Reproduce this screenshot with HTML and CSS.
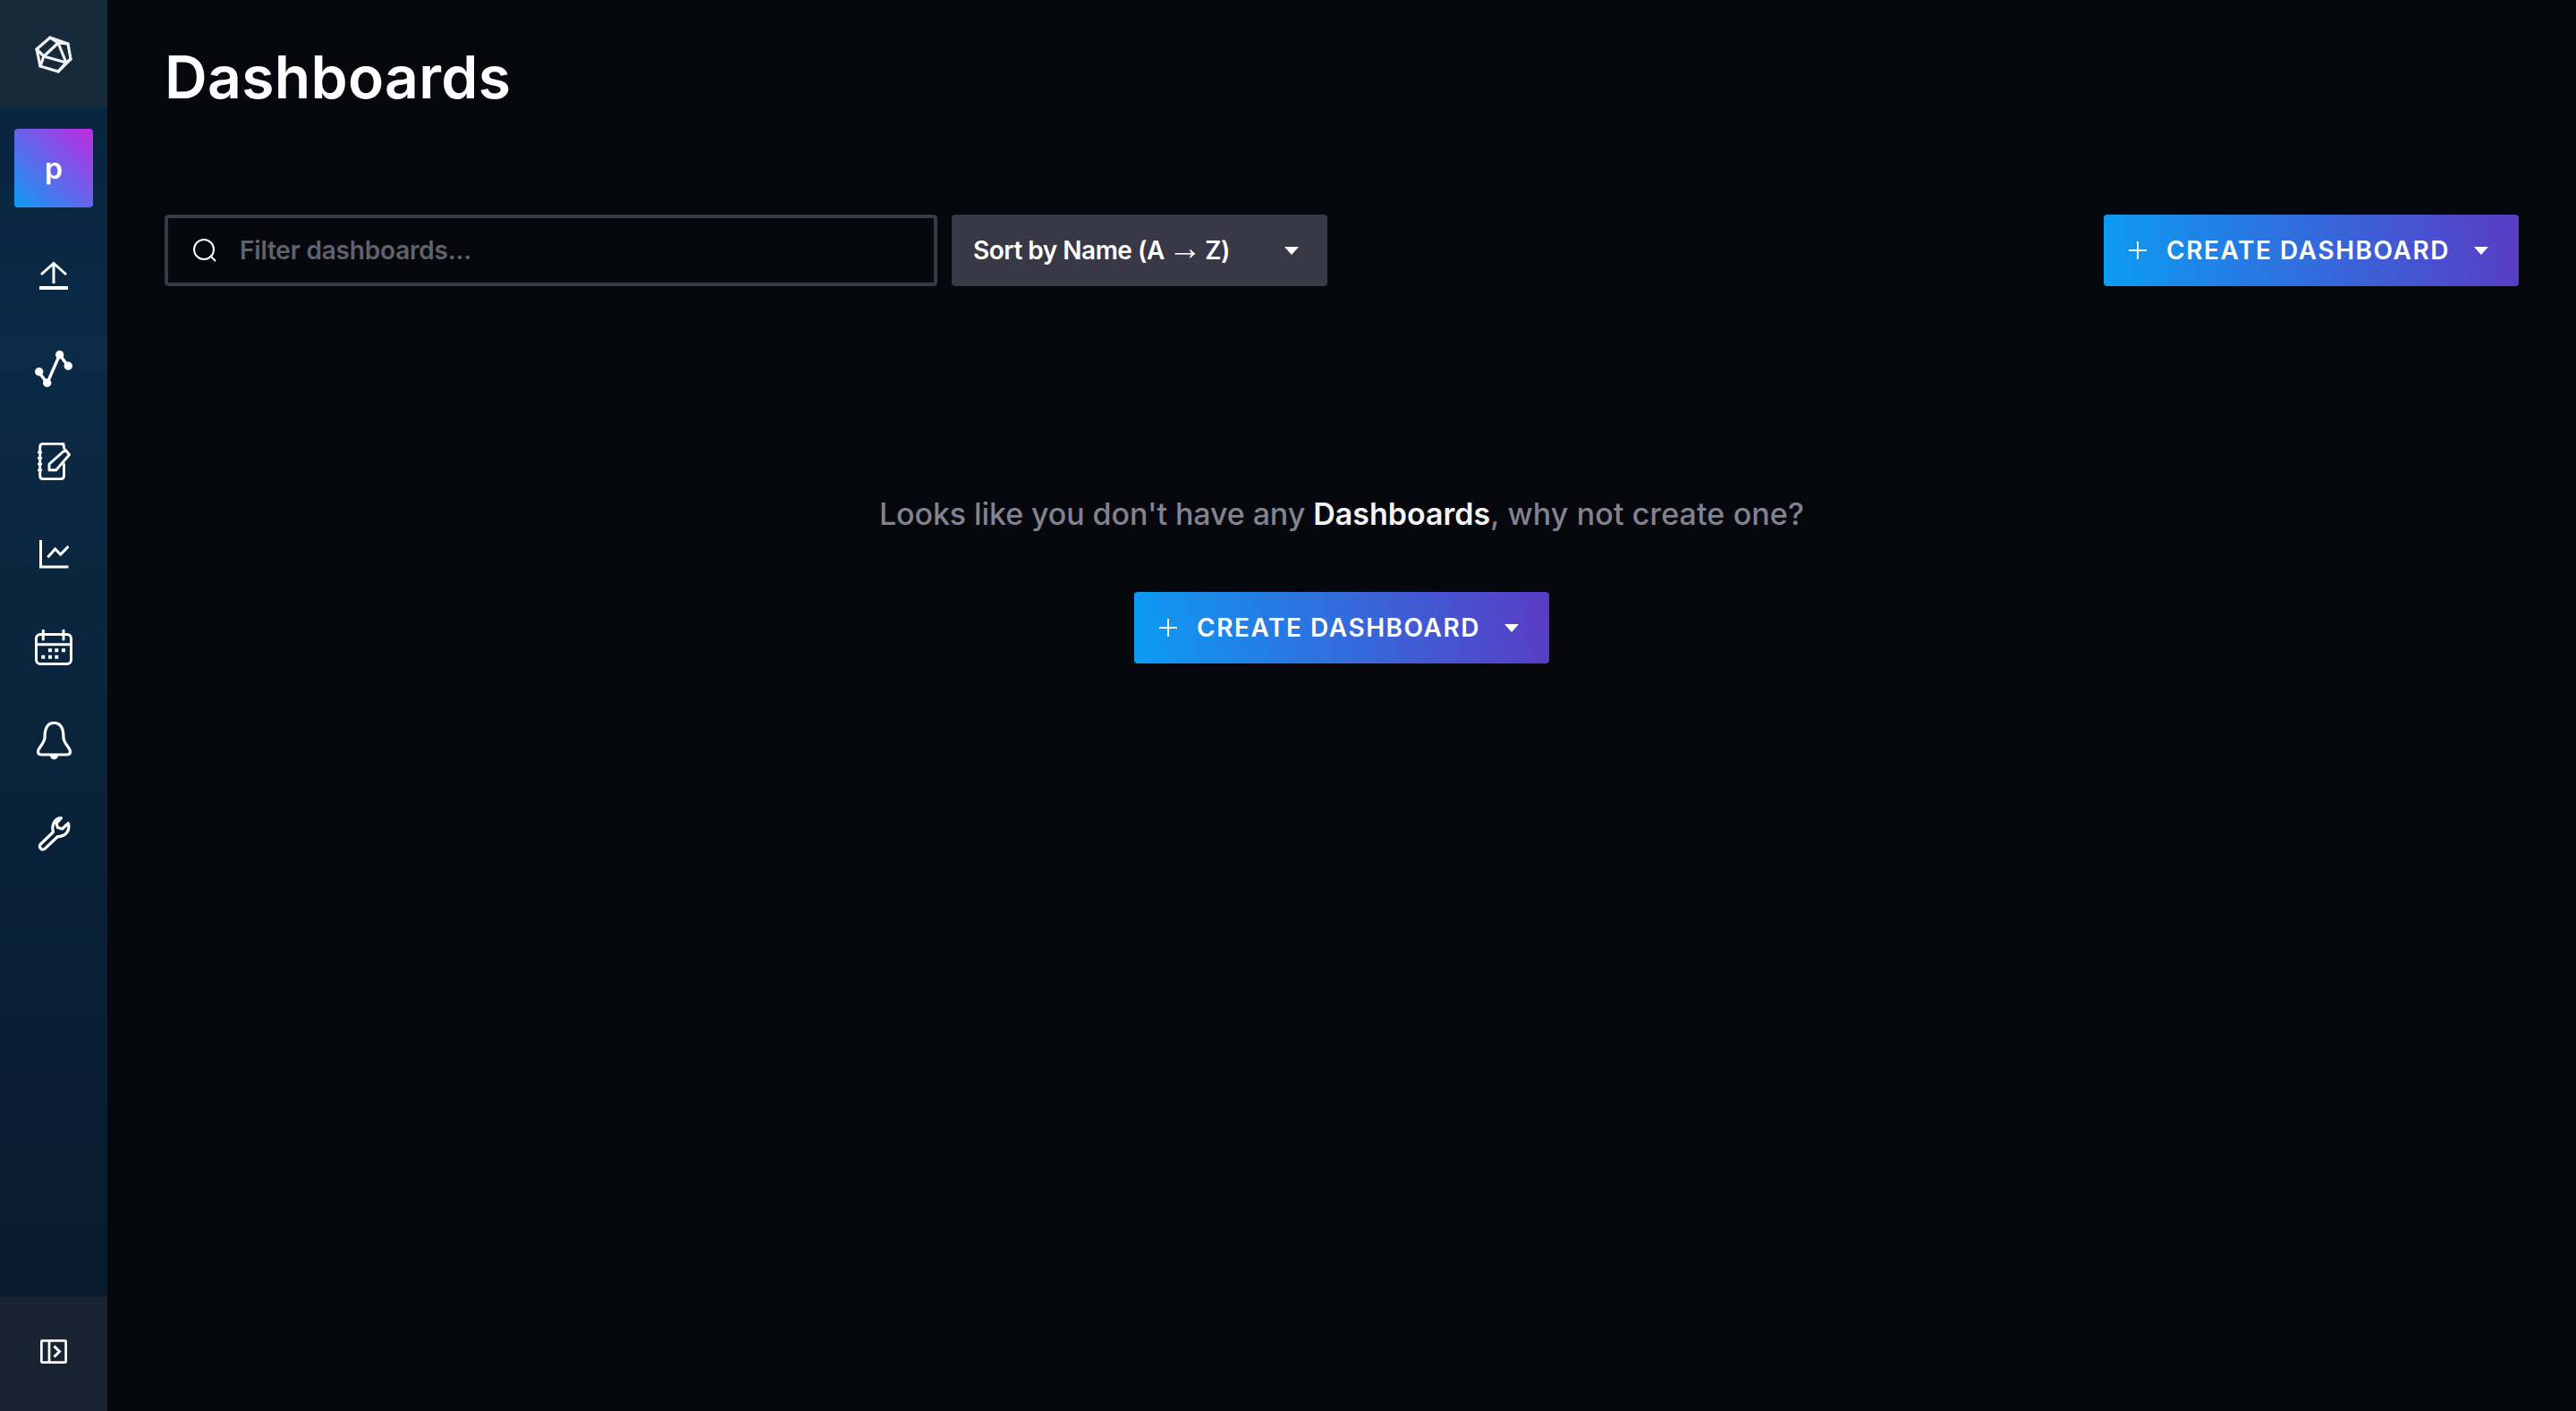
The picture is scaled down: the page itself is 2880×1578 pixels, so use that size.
FILE: index.html
```html
<!DOCTYPE html>
<html lang="en">
<head>
<meta charset="utf-8">
<title>Dashboards</title>
<link rel="stylesheet" href="styles.css">
</head>
<body>
<div class="app">
  <nav class="nav">
    <div class="nav-logo">
      <svg class="ico-logo" viewBox="0 0 42 42" fill="none" stroke="#f1f1f3" stroke-width="3.200" stroke-linejoin="round" stroke-linecap="round"><path d="M17 2 37 9 40 26 26 40 6 34 2 15Z"/><path d="M17 2 26 8 37 9M26 8 10 23 2 15M26 8 35 30 40 26M10 23 35 30 26 40M10 23 6 34"/></svg>
    </div>
    <div class="nav-org"><span class="org-tile">p</span></div>
    <div class="nav-items">
      <a class="nav-item"><svg class="ico-upload" viewBox="0 0 32 32" fill="none" stroke="#fff" stroke-width="3"><path d="M16 25V2.500M2 15 16 2.500 30 15"/><path d="M0 30h32" stroke-width="4"/></svg></a>
      <a class="nav-item"><svg class="ico-graph" viewBox="0 0 42 41" fill="none" stroke="#fff" stroke-width="3.400"><path d="M4.300 23.700 13.700 36.700 27.700 4.700 37 17.300"/><circle cx="4.700" cy="23.700" r="4.700" fill="#fff" stroke="none"/><circle cx="13.700" cy="36.300" r="4.700" fill="#fff" stroke="none"/><circle cx="27.700" cy="4.700" r="4.700" fill="#fff" stroke="none"/><circle cx="37.300" cy="17.300" r="4.700" fill="#fff" stroke="none"/></svg></a>
      <a class="nav-item"><svg class="ico-note" viewBox="0 0 37 42" fill="none" stroke="#fff" stroke-width="2.900" stroke-linejoin="round" stroke-linecap="round"><path d="M29 1.400H6Q2.700 1.400 2.700 5V37Q2.700 40.600 6 40.600H26Q29.500 40.600 29.500 37V24"/><path d="M26 1.400Q29.500 1.400 29.500 5V6"/><path d="M13 24V30.700H20.700L35.500 13.500 31 8Z"/><path d="M1 10.700H4M1 17.300H4M1 24H4M1 30.700H4" stroke-width="2.600"/></svg></a>
      <a class="nav-item"><svg class="ico-chart" viewBox="0 0 33 32" fill="none" stroke="#fff" stroke-width="3"><path d="M1.500 0V30H32.500"/><path d="M9.300 19.300 17.700 10 23.700 16 32.500 7"/></svg></a>
      <a class="nav-item"><svg class="ico-cal" viewBox="0 0 42 40" fill="none" stroke="#fff" stroke-width="3"><rect x="1.500" y="5.500" width="39" height="33" rx="4.500"/><path d="M1.500 16.700h39"/><path d="M9.300 1v10M32 1v10" stroke-linecap="round"/><path d="M15 23.300h4M22.300 23.300h4M30 23.300h4M7.300 30.700h4M15 30.700h4M22.300 30.700h4" stroke-width="4"/></svg></a>
      <a class="nav-item"><svg class="ico-bell" viewBox="0 0 39 43" fill="none" stroke="#fff" stroke-width="3.200" stroke-linejoin="round"><path d="M19.500 1.500C10.500 1.500 9 10 9 18C9 24 1.500 29.500 1.500 33.500C1.500 36 3 37 5 37H34C36 37 37.500 36 37.500 33.500C37.500 29.500 30 24 30 18C30 10 28.500 1.500 19.500 1.500Z"/><path d="M15 37.500H24A4.500 5 0 0 1 15 37.500Z" fill="#fff" stroke="none"/></svg></a>
      <a class="nav-item"><svg class="ico-wrench" viewBox="0 0 37 39" fill="none" stroke="#fff" stroke-width="3.200" stroke-linejoin="round"><path d="M26.500 1.800 21 8 22.500 12.500 27.500 14 34.300 7.800C36.500 15 32 23 22.500 22.500L8 36.300C5 38.500 1 35 3 31.500L17.500 17.500C15 9 20 1.500 26.500 1.800Z"/></svg></a>
    </div>
    <div class="nav-collapse">
      <svg class="ico-collapse" viewBox="0 0 30 27" fill="none" stroke="#fff" stroke-width="2.700"><rect x="1.350" y="1.350" width="27.300" height="24.300" rx="1"/><path d="M10 1v25"/><path d="M15.500 7.500 21.500 13.500 15.500 19.500" stroke-width="3"/></svg>
    </div>
  </nav>
  <main class="main">
    <h1 class="title">Dashboards</h1>
    <div class="toolbar">
      <label class="search">
        <svg class="search-ico" viewBox="0 0 26 26" fill="none" stroke="#fff" stroke-width="2"><circle cx="12" cy="12" r="11"/><path d="M19 19 25 25"/></svg>
        <span class="placeholder">Filter dashboards...</span>
      </label>
      <button class="sort"><span>Sort by Name (A<span class="arrow">→</span>Z)</span><i class="caret"></i></button>
      <button class="create toolbar-create"><span class="plus"></span><span class="create-label">CREATE DASHBOARD</span><i class="caret"></i></button>
    </div>
    <section class="empty">
      <p class="empty-text"><span class="lead">Looks like you don't have any</span> <b>Dashboards</b><span class="tail">, why not create one?</span></p>
      <button class="create"><span class="plus"></span><span class="create-label">CREATE DASHBOARD</span><i class="caret"></i></button>
    </section>
  </main>
</div>
</body>
</html>
```
FILE: styles.css
```css
* { box-sizing: border-box; }
html, body { margin: 0; height: 100%; background: #07080d; }
body { font-family: "Inter", "Roboto", sans-serif; color: #fff; }
.app { display: flex; height: 1578px; overflow: hidden; }

.nav { width: 120px; flex: none; display: flex; flex-direction: column; background: linear-gradient(180deg, #06233c 0%, #0b2a45 25%, #07182a 100%); }
.nav-logo { height: 120px; flex: none; display: flex; align-items: center; justify-content: center; padding-top: 2px; background: #172a3b; }
.nav-org { padding: 24px 16px 0; }
.org-tile { display: flex; width: 88px; height: 88px; align-items: center; justify-content: center; border-radius: 4px; background: linear-gradient(45deg, #0b9cf3 0%, #c22ae0 100%); font-size: 32px; font-weight: 600; }
.nav-items { flex: 1; padding-top: 24px; display: flex; flex-direction: column; }
.nav-item { height: 104px; display: flex; align-items: center; justify-content: center; }
.ico-logo { width: 42px; height: 42px; }
.ico-upload { width: 32px; height: 32px; }
.ico-graph { width: 42px; height: 41px; }
.ico-note { width: 37px; height: 42px; }
.ico-chart { width: 33px; height: 32px; }
.ico-cal { width: 42px; height: 40px; }
.ico-bell { width: 39px; height: 43px; }
.ico-wrench { width: 37px; height: 39px; }
.nav-collapse { height: 128px; flex: none; display: flex; align-items: center; justify-content: center; padding-bottom: 5px; background: #182431; }
.ico-collapse { width: 30px; height: 27px; }

.main { flex: 1; padding: 0 64px; min-width: 0; }
.title { margin: 0; height: 240px; padding-top: 48px; font-size: 66px; line-height: 76px; font-weight: 600; letter-spacing: 0.3px; }
.toolbar { display: flex; align-items: center; gap: 16px; }
.search { width: 864px; height: 80px; display: flex; align-items: center; padding-left: 28px; gap: 26px; border: 4px solid #383846; border-radius: 4px; background: #07080d; }
.search-ico { width: 26px; height: 26px; flex: none; }
.placeholder { font-size: 28px; font-weight: 600; letter-spacing: -0.2px; color: #62626f; }
.sort { width: 420px; height: 80px; display: flex; align-items: center; justify-content: space-between; padding: 0 32px 0 24px; border: 0; border-radius: 4px; background: #383846; color: #fff; font: 600 28px "Inter", "Roboto", sans-serif; letter-spacing: -0.5px; }
.arrow { display: inline-block; margin: 0 4px; font-family: "Liberation Serif", serif; font-size: 38px; line-height: 0; font-weight: 400; }
.caret { width: 0; height: 0; flex: none; border-left: 8.5px solid transparent; border-right: 8.5px solid transparent; border-top: 9px solid #fff; }
.create { width: 464px; height: 80px; display: flex; align-items: center; padding: 0 34px 0 28px; border: 0; border-radius: 4px; background: linear-gradient(80deg, #0b9cf3 0%, #5a3bc5 100%); color: #fff; font: 600 28px "Inter", "Roboto", sans-serif; letter-spacing: 1.55px; }
.toolbar-create { margin-left: auto; }
.create-label { flex: 1; text-align: left; white-space: nowrap; }
.create .plus { position: relative; width: 20px; height: 20px; flex: none; margin-right: 22px; }
.plus::before, .plus::after { content: ""; position: absolute; background: #fff; }
.plus::before { left: 0; right: 0; top: 9px; height: 2px; }
.plus::after { top: 0; bottom: 0; left: 9px; width: 2px; }

.empty { display: flex; flex-direction: column; align-items: center; padding-top: 233px; }
.empty-text { margin: 0 0 65px; font-size: 34px; line-height: 44px; font-weight: 500; color: #828290; }
.empty-text .lead { letter-spacing: -0.1px; }
.empty-text .tail { letter-spacing: 0.12px; }
.empty-text b { font-weight: 600; color: #f4f4f6; }
```
